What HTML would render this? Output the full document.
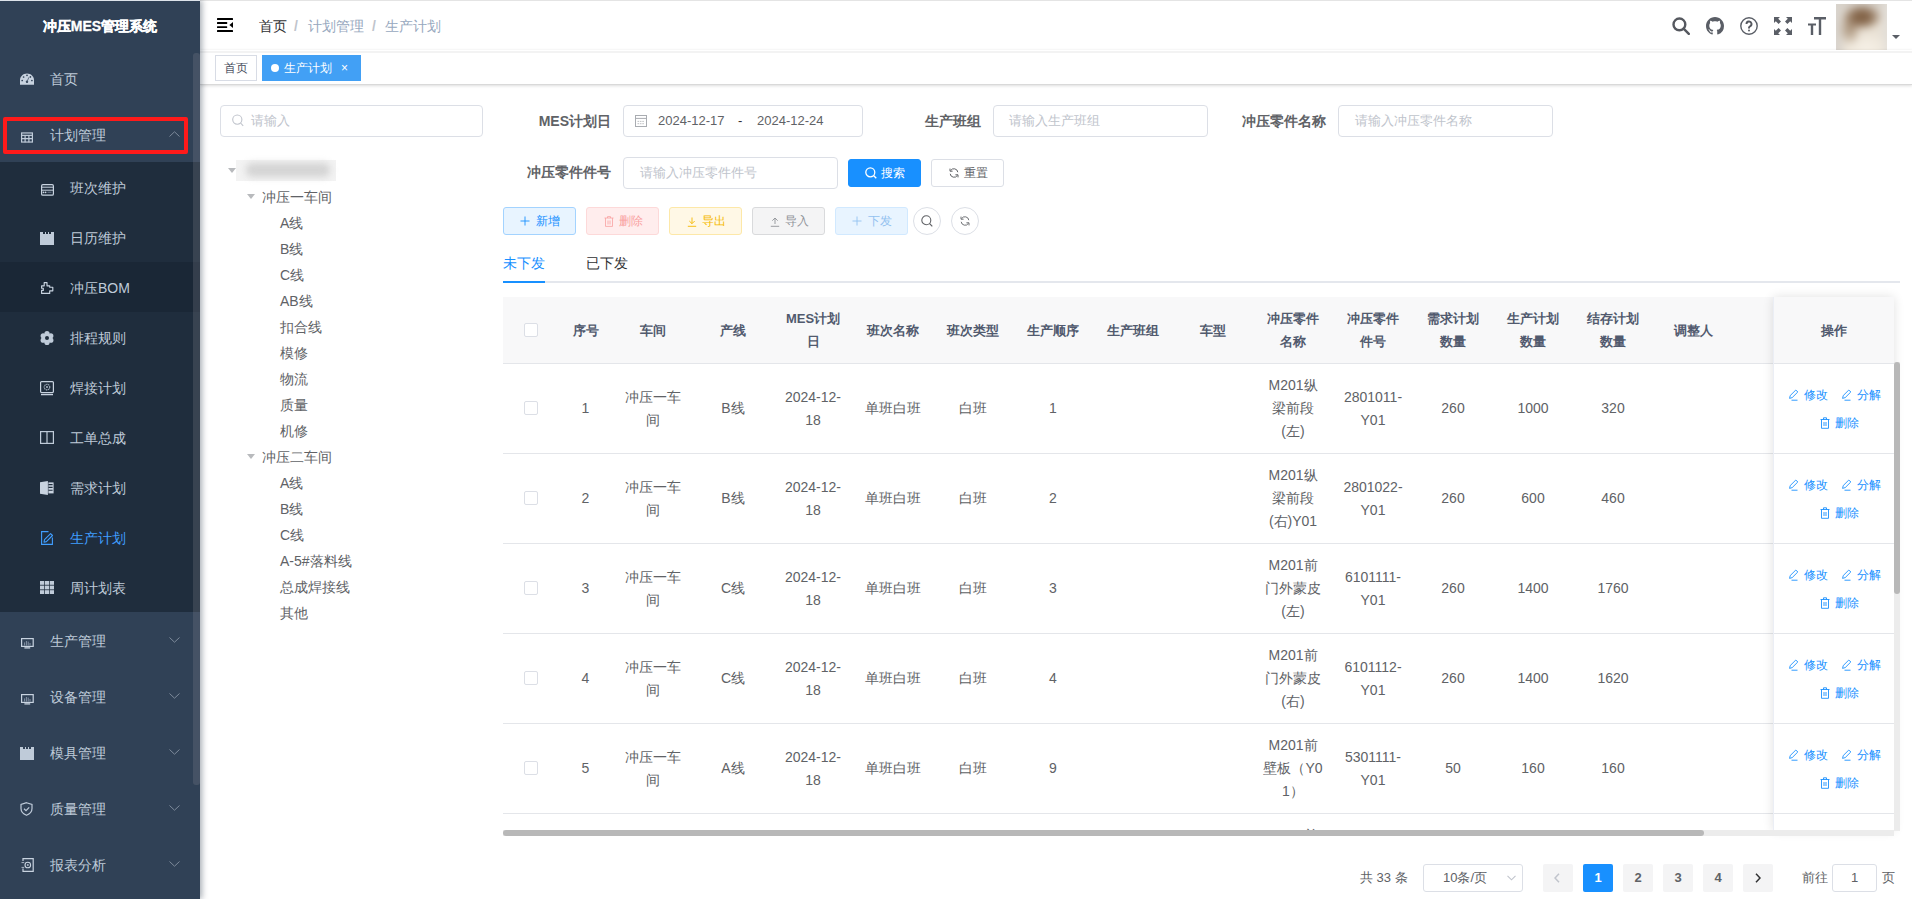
<!DOCTYPE html><html><head><meta charset="utf-8"><title>生产计划</title><style>
*{box-sizing:border-box;margin:0;padding:0}
html,body{width:1912px;height:899px;overflow:hidden}
body{position:relative;font-family:"Liberation Sans",sans-serif;font-size:14px;color:#606266;background:#fff}
.a{position:absolute;white-space:nowrap}
#side{left:0;top:0;width:200px;height:899px;background:#304156;box-shadow:2px 0 6px rgba(0,21,41,.35);z-index:5;overflow:hidden}
.mi{position:absolute;left:0;width:200px;color:#bfcbd9;font-size:14px}
.mi svg{position:absolute}
.inp{position:absolute;border:1px solid #dcdfe6;border-radius:4px;background:#fff}
.ph{position:absolute;color:#c0c4cc;font-size:13px}
.lbl{position:absolute;font-weight:bold;color:#606266;font-size:14px;text-align:right}
.btn{position:absolute;height:28px;border:1px solid;border-radius:3px;font-size:12px}
.btn span{position:absolute}
.th{position:absolute;font-weight:bold;color:#515a6e;font-size:13px;line-height:23px;text-align:center;display:flex;align-items:center;justify-content:center}
.td{position:absolute;color:#606266;font-size:14px;line-height:23px;text-align:center;display:flex;align-items:center;justify-content:center}
.td div,.th div{width:60px;word-break:break-all;white-space:normal}
.hl{position:absolute;height:1px;background:#e4e6ea}
.tree{position:absolute;font-size:14px;color:#606266;line-height:26px}
.pg{position:absolute;top:864px;width:30px;height:28px;background:#f4f4f5;border-radius:2px;font-size:13px;font-weight:bold;color:#606266;text-align:center;line-height:28px}
</style></head><body>
<div id="side" class="a">
<div class="a" style="left:0;top:1px;width:200px;height:50px;line-height:50px;text-align:center;color:#fff;font-weight:bold;font-size:14px;-webkit-text-stroke:0.3px #fff">冲压MES管理系统</div>
<div class="a" style="left:0;top:162px;width:200px;height:450px;background:#1f2d3d"></div>
<div class="a" style="left:0;top:262px;width:200px;height:50px;background:#1a2736"></div>
<div class="a" style="left:20px;top:72px"><svg width="14" height="12" viewBox="0 0 14 12"><path d="M0 11.8V7.2C0 3.2 3.1 0.4 7 0.4S14 3.2 14 7.2v4.6z" fill="#c8d3e0"/><g fill="#304156"><circle cx="3.6" cy="4" r="0.85"/><circle cx="7" cy="2.3" r="0.85"/><circle cx="10.4" cy="3.9" r="0.85"/><circle cx="2.2" cy="7.5" r="0.85"/><circle cx="11.9" cy="7.5" r="0.85"/><circle cx="7" cy="8.8" r="1.2"/></g><path d="M7 8.8L8.9 4.3" stroke="#56657a" stroke-width="0.9"/></svg></div>
<div class="a" style="left:50px;top:69px;line-height:20px;color:#bfcbd9">首页</div>
<div class="a" style="left:21px;top:130px"><svg width="12" height="11" viewBox="0 0 14 12"><rect x="0.7" y="0.7" width="12.6" height="10.6" fill="none" stroke="#bfcbd9" stroke-width="1.4"/><path d="M0.7 3.5h12.6" stroke="#bfcbd9" stroke-width="1.4"/><path d="M4.8 3.5v8M9.2 3.5v8M0.7 7.4h12.6" stroke="#bfcbd9" stroke-width="1.4"/></svg></div>
<div class="a" style="left:50px;top:125px;line-height:20px;color:#bfcbd9">计划管理</div>
<svg class="a" style="left:169px;top:131px" width="11" height="6" viewBox="0 0 11 6"><path d="M0.5 5.5L5.5 0.8l5 4.7" fill="none" stroke="#7d8a9b" stroke-width="1"/></svg>
<div class="a" style="left:41px;top:183px"><svg width="13" height="12" viewBox="0 0 13 12"><rect x="0.6" y="0.6" width="11.8" height="10.6" rx="1.3" fill="none" stroke="#c8d3e0" stroke-width="1.2"/><path d="M0.6 3.2H12.4M0.6 6.2H12.4" stroke="#c8d3e0" stroke-width="1"/><circle cx="2.5" cy="8.3" r="0.9" fill="#c8d3e0"/><circle cx="4.6" cy="8.3" r="0.9" fill="#c8d3e0"/><path d="M6.5 8.3H10.5" stroke="#56657a" stroke-width="1.4"/></svg></div>
<div class="a" style="left:70px;top:178px;line-height:20px;color:#bfcbd9">班次维护</div>
<div class="a" style="left:40px;top:231px"><svg width="14" height="14" viewBox="0 0 14 14"><rect x="0" y="1" width="14" height="13" fill="#bfcbd9"/><rect x="3" y="0" width="2" height="3" fill="#1f2d3d"/><rect x="9" y="0" width="2" height="3" fill="#1f2d3d"/><rect x="6" y="0" width="2" height="3" fill="#1f2d3d"/></svg></div>
<div class="a" style="left:70px;top:228px;line-height:20px;color:#bfcbd9">日历维护</div>
<div class="a" style="left:41px;top:282px"><svg width="13" height="13" viewBox="0 0 13 13"><path d="M0.6 3.8H3.2V0.6H6V3.8H8.7V5.2H11.8V8.8H8.7V11.4H0.6V8.4H2.3V6.2H0.6Z" fill="none" stroke="#c8d3e0" stroke-width="1.15" stroke-linejoin="round"/></svg></div>
<div class="a" style="left:70px;top:278px;line-height:20px;color:#bfcbd9">冲压BOM</div>
<div class="a" style="left:40px;top:331px"><svg width="14" height="14" viewBox="0 0 14 14"><g fill="#bfcbd9"><circle cx="7" cy="2.6" r="2.6"/><circle cx="7" cy="11.4" r="2.6"/><circle cx="3.2" cy="4.8" r="2.6"/><circle cx="10.8" cy="4.8" r="2.6"/><circle cx="3.2" cy="9.2" r="2.6"/><circle cx="10.8" cy="9.2" r="2.6"/><circle cx="7" cy="7" r="4.5"/></g><circle cx="7" cy="7" r="2" fill="#1f2d3d"/></svg></div>
<div class="a" style="left:70px;top:328px;line-height:20px;color:#bfcbd9">排程规则</div>
<div class="a" style="left:40px;top:381px"><svg width="14" height="15" viewBox="0 0 14 15"><rect x="0.6" y="0.6" width="12.8" height="11" rx="1" fill="none" stroke="#c8d3e0" stroke-width="1.2"/><path d="M1 13.6H13" stroke="#c8d3e0" stroke-width="1.3"/><circle cx="7" cy="6.1" r="2.8" fill="none" stroke="#aab6c5" stroke-width="1.1" stroke-dasharray="1.4 0.6"/><circle cx="7" cy="6.1" r="1" fill="#aab6c5"/></svg></div>
<div class="a" style="left:70px;top:378px;line-height:20px;color:#bfcbd9">焊接计划</div>
<div class="a" style="left:40px;top:431px"><svg width="14" height="13" viewBox="0 0 14 13"><rect x="0.6" y="0.6" width="12.8" height="11.8" fill="none" stroke="#bfcbd9" stroke-width="1.2"/><path d="M7 0.6v11.8" stroke="#bfcbd9" stroke-width="1.2"/></svg></div>
<div class="a" style="left:70px;top:428px;line-height:20px;color:#bfcbd9">工单总成</div>
<div class="a" style="left:40px;top:481px"><svg width="14" height="14" viewBox="0 0 14 14"><path d="M0 1.2L7.9 0V14L0 12.8Z" fill="#c8d3e0"/><rect x="8.4" y="1.4" width="5.2" height="11" fill="#c8d3e0"/><path d="M8.4 3.6H12.6M8.4 6.4H12.6M8.4 9.2H12.6" stroke="#1f2d3d" stroke-width="1.1"/></svg></div>
<div class="a" style="left:70px;top:478px;line-height:20px;color:#bfcbd9">需求计划</div>
<div class="a" style="left:41px;top:531px"><svg width="13" height="15" viewBox="0 0 13 15"><path d="M7.5 0.6H0.6V13.4H11.4V6.5" fill="none" stroke="#409eff" stroke-width="1.1"/><path d="M3 11.2L3.5 8.7 9.6 2.6 11.5 4.5 5.4 10.6Z" fill="none" stroke="#409eff" stroke-width="1.1" stroke-linejoin="round"/></svg></div>
<div class="a" style="left:70px;top:528px;line-height:20px;color:#409eff">生产计划</div>
<div class="a" style="left:40px;top:581px"><svg width="14" height="13" viewBox="0 0 14 13"><g fill="#bfcbd9"><rect x="0" y="0" width="4.2" height="3.8"/><rect x="4.9" y="0" width="4.2" height="3.8"/><rect x="9.8" y="0" width="4.2" height="3.8"/><rect x="0" y="4.6" width="4.2" height="3.8"/><rect x="4.9" y="4.6" width="4.2" height="3.8"/><rect x="9.8" y="4.6" width="4.2" height="3.8"/><rect x="0" y="9.2" width="4.2" height="3.8"/><rect x="4.9" y="9.2" width="4.2" height="3.8"/><rect x="9.8" y="9.2" width="4.2" height="3.8"/></g></svg></div>
<div class="a" style="left:70px;top:578px;line-height:20px;color:#bfcbd9">周计划表</div>
<div class="a" style="left:21px;top:636px"><svg width="13" height="11" viewBox="0 0 13 11"><rect x="0.6" y="0.6" width="11.6" height="7.8" fill="none" stroke="#c8d3e0" stroke-width="1.2"/><path d="M3.6 7.6V4.4M5.4 7.6V3M7.2 7.6V3.6M9 7.6V5" stroke="#8593a6" stroke-width="1"/><path d="M3.4 9.9H9.2" stroke="#c8d3e0" stroke-width="1.3"/></svg></div>
<div class="a" style="left:50px;top:631px;line-height:20px;color:#bfcbd9">生产管理</div>
<svg class="a" style="left:169px;top:637px" width="11" height="6" viewBox="0 0 11 6"><path d="M0.5 0.5l5 4.7 5-4.7" fill="none" stroke="#7d8a9b" stroke-width="1"/></svg>
<div class="a" style="left:21px;top:692px"><svg width="13" height="11" viewBox="0 0 13 11"><rect x="0.6" y="0.6" width="11.6" height="7.8" fill="none" stroke="#c8d3e0" stroke-width="1.2"/><path d="M3.6 7.6V4.4M5.4 7.6V3M7.2 7.6V3.6M9 7.6V5" stroke="#8593a6" stroke-width="1"/><path d="M3.4 9.9H9.2" stroke="#c8d3e0" stroke-width="1.3"/></svg></div>
<div class="a" style="left:50px;top:687px;line-height:20px;color:#bfcbd9">设备管理</div>
<svg class="a" style="left:169px;top:693px" width="11" height="6" viewBox="0 0 11 6"><path d="M0.5 0.5l5 4.7 5-4.7" fill="none" stroke="#7d8a9b" stroke-width="1"/></svg>
<div class="a" style="left:20px;top:746px"><svg width="14" height="14" viewBox="0 0 14 14"><rect x="0" y="1" width="14" height="13" fill="#bfcbd9"/><rect x="3" y="0" width="2" height="3" fill="#304156"/><rect x="9" y="0" width="2" height="3" fill="#304156"/><rect x="6" y="0" width="2" height="3" fill="#304156"/></svg></div>
<div class="a" style="left:50px;top:743px;line-height:20px;color:#bfcbd9">模具管理</div>
<svg class="a" style="left:169px;top:749px" width="11" height="6" viewBox="0 0 11 6"><path d="M0.5 0.5l5 4.7 5-4.7" fill="none" stroke="#7d8a9b" stroke-width="1"/></svg>
<div class="a" style="left:20px;top:802px"><svg width="13" height="14" viewBox="0 0 13 14"><path d="M6.5 0.7L12 2.4v4.2c0 3.4-2.6 5.6-5.5 6.7C3.6 12.2 1 10 1 6.6V2.4z" fill="none" stroke="#bfcbd9" stroke-width="1.2"/><path d="M4 6.8l2 1.8 3.2-3.3" fill="none" stroke="#bfcbd9" stroke-width="1.2"/></svg></div>
<div class="a" style="left:50px;top:799px;line-height:20px;color:#bfcbd9">质量管理</div>
<svg class="a" style="left:169px;top:805px" width="11" height="6" viewBox="0 0 11 6"><path d="M0.5 0.5l5 4.7 5-4.7" fill="none" stroke="#7d8a9b" stroke-width="1"/></svg>
<div class="a" style="left:21px;top:858px"><svg width="13" height="14" viewBox="0 0 13 14"><path d="M2 3V0.6H12.2V13.4H2V10.6" fill="none" stroke="#c8d3e0" stroke-width="1.2"/><path d="M0.5 4.6H3.2M0.5 9.4H3.2" stroke="#aab6c5" stroke-width="1"/><circle cx="6.8" cy="7" r="2.8" fill="none" stroke="#c8d3e0" stroke-width="1.1"/><circle cx="6.8" cy="7" r="1" fill="#aab6c5"/></svg></div>
<div class="a" style="left:50px;top:855px;line-height:20px;color:#bfcbd9">报表分析</div>
<svg class="a" style="left:169px;top:861px" width="11" height="6" viewBox="0 0 11 6"><path d="M0.5 0.5l5 4.7 5-4.7" fill="none" stroke="#7d8a9b" stroke-width="1"/></svg>
<div class="a" style="left:3px;top:117px;width:185px;height:37px;border:4px solid #ff1a1a;border-radius:2px"></div>
<div class="a" style="left:0;top:0;width:200px;height:1px;background:#dde3ea"></div>
<div class="a" style="left:193px;top:53px;width:7px;height:732px;background:rgba(144,147,153,.22);border-radius:3px"></div>
</div>
<div class="a" style="left:200px;top:0;width:1712px;height:50px;background:#fff;border-top:1px solid #e4e4e4"></div>
<svg class="a" style="left:217px;top:17px" width="16" height="16" viewBox="0 0 16 16"><g fill="#000"><rect x="0" y="0.9" width="16" height="2" rx="0.5"/><rect x="0" y="5.1" width="10.2" height="1.8" rx="0.5"/><rect x="0" y="9.2" width="10.2" height="1.8" rx="0.5"/><rect x="0" y="13" width="16" height="2" rx="0.5"/><path d="M16 5.1V10.9L12.4 8z"/></g></svg>
<div class="a" style="left:259px;top:16px;line-height:20px;color:#303133">首页</div>
<div class="a" style="left:294px;top:16px;line-height:20px;color:#c0c4cc;font-weight:bold">/</div>
<div class="a" style="left:308px;top:16px;line-height:20px;color:#97a8be">计划管理</div>
<div class="a" style="left:372px;top:16px;line-height:20px;color:#c0c4cc;font-weight:bold">/</div>
<div class="a" style="left:385px;top:16px;line-height:20px;color:#97a8be">生产计划</div>
<svg class="a" style="left:1672px;top:17px" width="18" height="18" viewBox="0 0 18 18"><circle cx="7.4" cy="7.4" r="5.9" fill="none" stroke="#55585f" stroke-width="2.4"/><path d="M11.6 11.6L16.8 16.8" stroke="#55585f" stroke-width="2.4" stroke-linecap="round"/></svg>
<svg class="a" style="left:1706px;top:17px" width="18" height="18" viewBox="0 0 16 16"><path fill="#5a5e66" d="M8 0C3.58 0 0 3.58 0 8c0 3.54 2.29 6.53 5.47 7.59.4.07.55-.17.55-.38 0-.19-.01-.82-.01-1.49-2.01.37-2.53-.49-2.69-.94-.09-.23-.48-.94-.82-1.13-.28-.15-.68-.52-.01-.53.63-.01 1.08.58 1.23.82.72 1.21 1.87.87 2.33.66.07-.52.28-.87.51-1.07-1.78-.2-3.64-.89-3.64-3.95 0-.87.31-1.59.82-2.15-.08-.2-.36-1.02.08-2.12 0 0 .67-.21 2.2.82.64-.18 1.32-.27 2-.27.68 0 1.36.09 2 .27 1.53-1.04 2.2-.82 2.2-.82.44 1.1.16 1.92.08 2.12.51.56.82 1.27.82 2.15 0 3.07-1.87 3.75-3.65 3.95.29.25.54.73.54 1.48 0 1.07-.01 1.93-.01 2.2 0 .21.15.46.55.38A8.013 8.013 0 0016 8c0-4.42-3.58-8-8-8z"/></svg>
<svg class="a" style="left:1740px;top:17px" width="18" height="18" viewBox="0 0 18 18"><circle cx="9" cy="9" r="8.2" fill="none" stroke="#5a5e66" stroke-width="1.4"/><path d="M6.5 7a2.5 2.5 0 1 1 3.5 2.3c-.7.3-1 .8-1 1.5v.7" fill="none" stroke="#55585f" stroke-width="1.9"/><circle cx="9" cy="13.6" r="1" fill="#5a5e66"/></svg>
<svg class="a" style="left:1774px;top:17px" width="18" height="18" viewBox="0 0 18 18"><g fill="#5a5e66"><path d="M0 0h6L4.2 1.8 7 4.6 4.6 7 1.8 4.2 0 6z"/><path d="M18 0v6l-1.8-1.8L13.4 7 11 4.6l2.8-2.8L12 0z"/><path d="M0 18v-6l1.8 1.8L4.6 11 7 13.4l-2.8 2.8L6 18z"/><path d="M18 18h-6l1.8-1.8L11 13.4 13.4 11l2.8 2.8L18 12z"/></g></svg>
<svg class="a" style="left:1808px;top:17px" width="18" height="18" viewBox="0 0 18 18"><g fill="#5a5e66"><path d="M6 0h12v2.4h-4.8V18h-2.4V2.4H6z"/><path d="M0 6.5h8v2H5.2V18H2.8V8.5H0z"/></g></svg>
<div class="a" style="left:1836px;top:4px;width:51px;height:46px;overflow:hidden;background:#ebe4d9"><div class="a" style="left:-6px;top:-6px;width:63px;height:58px;background:radial-gradient(ellipse 21px 14px at 32px 19px,#7d5c3f 0%,rgba(125,92,63,.85) 40%,rgba(160,130,100,0) 100%),radial-gradient(ellipse 12px 17px at 20px 31px,rgba(140,110,80,.7) 0%,rgba(160,130,100,0) 100%),radial-gradient(ellipse 24px 16px at 37px 50px,#f6f0e6 0%,rgba(246,240,230,0) 100%),linear-gradient(to right,#d6d3d0 0,#d9d3cb 9px,rgba(230,222,210,0) 18px,rgba(230,222,210,0) 48px,#e2ded8 57px),linear-gradient(#cfc9c2 0,#e6ded2 22px,#efe7da 58px);filter:blur(3px)"></div></div>
<svg class="a" style="left:1892px;top:35px" width="8" height="4" viewBox="0 0 8 4"><path d="M0 0h8L4 4z" fill="#5a5e66"/></svg>
<div class="a" style="left:200px;top:50px;width:1712px;height:35px;background:#fff;border-bottom:1px solid #d9d9d9;box-shadow:0 1px 3px 0 rgba(0,0,0,.12),0 0 3px 0 rgba(0,0,0,.04)"></div>
<div class="a" style="left:200px;top:51px;width:1712px;height:2px;background:#f3f3f3;filter:blur(0.6px)"></div>
<div class="a" style="left:215px;top:55px;width:42px;height:26px;border:1px solid #d8dce5;font-size:12px;color:#495060;line-height:24px;text-align:center">首页</div>
<div class="a" style="left:262px;top:55px;width:99px;height:26px;background:#42a0f5;border:1px solid #42a0f5;font-size:12px;color:#fff;line-height:24px"><span class="a" style="left:8px;top:8px;width:8px;height:8px;border-radius:4px;background:#fff"></span><span class="a" style="left:21px;top:0">生产计划</span><span class="a" style="left:78px;top:0;font-size:12px">×</span></div>
<div class="inp" style="left:220px;top:105px;width:263px;height:32px"></div>
<svg class="a" style="left:232px;top:114px" width="12" height="13" viewBox="0 0 12 13"><circle cx="5.3" cy="5.6" r="4.6" fill="none" stroke="#c0c4cc" stroke-width="1.1"/><path d="M8.6 9l2.6 2.8" stroke="#c0c4cc" stroke-width="1.1"/></svg>
<div class="ph" style="left:251px;top:111px;line-height:20px">请输入</div>
<svg class="a" style="left:228px;top:168px" width="8" height="5" viewBox="0 0 8 5"><path d="M0 0h8L4 5z" fill="#b8babd"/></svg>
<div class="a" style="left:236px;top:160px;width:100px;height:21px;background:#f3f3f3"></div><div class="a" style="left:246px;top:163px;width:84px;height:14px;background:#d4d4d4;border-radius:6px;filter:blur(3.5px)"></div>
<svg class="a" style="left:247px;top:194px" width="8" height="5" viewBox="0 0 8 5"><path d="M0 0h8L4 5z" fill="#b8babd"/></svg>
<div class="tree" style="left:262px;top:184px">冲压一车间</div>
<div class="tree" style="left:280px;top:210px">A线</div>
<div class="tree" style="left:280px;top:236px">B线</div>
<div class="tree" style="left:280px;top:262px">C线</div>
<div class="tree" style="left:280px;top:288px">AB线</div>
<div class="tree" style="left:280px;top:314px">扣合线</div>
<div class="tree" style="left:280px;top:340px">模修</div>
<div class="tree" style="left:280px;top:366px">物流</div>
<div class="tree" style="left:280px;top:392px">质量</div>
<div class="tree" style="left:280px;top:418px">机修</div>
<svg class="a" style="left:247px;top:454px" width="8" height="5" viewBox="0 0 8 5"><path d="M0 0h8L4 5z" fill="#b8babd"/></svg>
<div class="tree" style="left:262px;top:444px">冲压二车间</div>
<div class="tree" style="left:280px;top:470px">A线</div>
<div class="tree" style="left:280px;top:496px">B线</div>
<div class="tree" style="left:280px;top:522px">C线</div>
<div class="tree" style="left:280px;top:548px">A-5#落料线</div>
<div class="tree" style="left:280px;top:574px">总成焊接线</div>
<div class="tree" style="left:280px;top:600px">其他</div>
<div class="lbl" style="left:511px;top:111px;width:100px;line-height:20px">MES计划日</div>
<div class="inp" style="left:623px;top:105px;width:240px;height:32px"></div>
<svg class="a" style="left:635px;top:115px" width="12" height="12" viewBox="0 0 12 12"><rect x="0.5" y="0.5" width="11" height="11" fill="none" stroke="#a9acb1" stroke-width="1"/><path d="M0.5 3.4h11" stroke="#a9acb1" stroke-width="1"/><path d="M2.5 6.4h7M2.5 8.7h7" stroke="#b8babd" stroke-width="0.9" stroke-dasharray="1.6 0.8"/></svg>
<div class="a" style="left:658px;top:111px;line-height:20px;font-size:13px;color:#606266">2024-12-17</div>
<div class="a" style="left:738px;top:111px;line-height:20px;font-size:13px;color:#303133">-</div>
<div class="a" style="left:757px;top:111px;line-height:20px;font-size:13px;color:#606266">2024-12-24</div>
<div class="lbl" style="left:881px;top:111px;width:100px;line-height:20px">生产班组</div>
<div class="inp" style="left:993px;top:105px;width:215px;height:32px"></div>
<div class="ph" style="left:1009px;top:111px;line-height:20px">请输入生产班组</div>
<div class="lbl" style="left:1206px;top:111px;width:120px;line-height:20px">冲压零件名称</div>
<div class="inp" style="left:1338px;top:105px;width:215px;height:32px"></div>
<div class="ph" style="left:1355px;top:111px;line-height:20px">请输入冲压零件名称</div>
<div class="lbl" style="left:491px;top:162px;width:120px;line-height:20px">冲压零件件号</div>
<div class="inp" style="left:623px;top:157px;width:215px;height:32px"></div>
<div class="ph" style="left:640px;top:163px;line-height:20px">请输入冲压零件件号</div>
<div class="btn" style="left:848px;top:159px;width:73px;background:#1890ff;border-color:#1890ff;color:#fff"><svg class="a" style="left:16px;top:7px" width="12" height="12" viewBox="0 0 12 12"><circle cx="5.3" cy="5.3" r="4.5" fill="none" stroke="#fff" stroke-width="1.3"/><path d="M8.5 8.5l2.8 2.8" stroke="#fff" stroke-width="1.3"/></svg><span style="left:32px;top:6px;line-height:14px">搜索</span></div>
<div class="btn" style="left:931px;top:159px;width:73px;background:#fff;border-color:#dcdfe6;color:#606266"><svg class="a" style="left:17px;top:8px" width="10" height="10" viewBox="0 0 10 10"><path d="M8.8 4.2A3.9 3.9 0 0 0 1.6 2.6M1.2 5.8a3.9 3.9 0 0 0 7.2 1.6" fill="none" stroke="#606266" stroke-width="1"/><path d="M1 0.6v2.6h2.6M9 9.4V6.8H6.4" fill="none" stroke="#606266" stroke-width="1"/></svg><span style="left:32px;top:6px;line-height:14px">重置</span></div>
<div class="btn" style="left:503px;top:207px;width:73px;background:#e8f4ff;border-color:#a3d3ff;color:#1890ff"><svg class="a" style="left:16px;top:8px" width="10" height="10" viewBox="0 0 10 10"><path d="M5 0.5v9M0.5 5h9" stroke="#1890ff" stroke-width="0.9"/></svg><span style="left:32px;top:6px;line-height:14px">新增</span></div>
<div class="btn" style="left:586px;top:207px;width:73px;background:#ffeded;border-color:#fdd9d9;color:#f9a1a1"><svg class="a" style="left:17px;top:8px" width="10" height="11" viewBox="0 0 10 11"><path d="M0.5 2h9M3.5 2V0.6h3V2M1.5 2v8.4h7V2M4 4.5v4M6 4.5v4" fill="none" stroke="#f9a1a1" stroke-width="0.8"/></svg><span style="left:32px;top:6px;line-height:14px">删除</span></div>
<div class="btn" style="left:669px;top:207px;width:73px;background:#fff8e6;border-color:#fde8a8;color:#f5b800"><svg class="a" style="left:17px;top:9px" width="10" height="10" viewBox="0 0 10 10"><path d="M5 0.5v6M2.3 4l2.7 2.7L7.7 4M0.8 9.3h8.4" fill="none" stroke="#f5b800" stroke-width="0.9"/></svg><span style="left:32px;top:6px;line-height:14px">导出</span></div>
<div class="btn" style="left:752px;top:207px;width:73px;background:#f4f4f5;border-color:#d9dadc;color:#909399"><svg class="a" style="left:17px;top:9px" width="10" height="10" viewBox="0 0 10 10"><path d="M5 7V1M2.3 3.7L5 1l2.7 2.7M0.8 9.3h8.4" fill="none" stroke="#909399" stroke-width="0.9"/></svg><span style="left:32px;top:6px;line-height:14px">导入</span></div>
<div class="btn" style="left:835px;top:207px;width:73px;background:#e8f4ff;border-color:#d1e9ff;color:#93c2f0"><svg class="a" style="left:16px;top:8px" width="10" height="10" viewBox="0 0 10 10"><path d="M5 0.5v9M0.5 5h9" stroke="#93c2f0" stroke-width="0.9"/></svg><span style="left:32px;top:6px;line-height:14px">下发</span></div>
<div class="a" style="left:913px;top:207px;width:28px;height:28px;border:1px solid #dcdfe6;border-radius:14px;background:#fff"><svg class="a" style="left:7px;top:7px" width="12" height="12" viewBox="0 0 12 12"><circle cx="5.3" cy="5.3" r="4.5" fill="none" stroke="#606266" stroke-width="1.1"/><path d="M8.5 8.5l2.8 2.8" stroke="#606266" stroke-width="1.1"/></svg></div>
<div class="a" style="left:951px;top:207px;width:28px;height:28px;border:1px solid #dcdfe6;border-radius:14px;background:#fff"><svg class="a" style="left:8px;top:8px" width="10" height="10" viewBox="0 0 10 10"><path d="M8.8 4.2A3.9 3.9 0 0 0 1.6 2.6M1.2 5.8a3.9 3.9 0 0 0 7.2 1.6" fill="none" stroke="#606266" stroke-width="0.9"/><path d="M1 0.6v2.6h2.6M9 9.4V6.8H6.4" fill="none" stroke="#606266" stroke-width="0.9"/></svg></div>
<div class="a" style="left:503px;top:281px;width:1397px;height:2px;background:#e4e7ed"></div>
<div class="a" style="left:503px;top:281px;width:42px;height:2px;background:#1890ff"></div>
<div class="a" style="left:503px;top:253px;line-height:20px;color:#1890ff">未下发</div>
<div class="a" style="left:586px;top:253px;line-height:20px;color:#303133">已下发</div>
<div class="a" style="left:503px;top:297px;width:1391px;height:66px;background:#f8f8f9"></div>
<div class="hl" style="left:503px;top:363px;width:1391px"></div>
<div class="a" style="left:524px;top:323px;width:14px;height:14px;border:1px solid #dcdfe6;border-radius:2px;background:#fff"></div>
<div class="th" style="left:558px;top:297px;width:55px;height:66px"><div>序号</div></div>
<div class="th" style="left:613px;top:297px;width:80px;height:66px"><div>车间</div></div>
<div class="th" style="left:693px;top:297px;width:80px;height:66px"><div>产线</div></div>
<div class="th" style="left:773px;top:297px;width:80px;height:66px"><div>MES计划日</div></div>
<div class="th" style="left:853px;top:297px;width:80px;height:66px"><div>班次名称</div></div>
<div class="th" style="left:933px;top:297px;width:80px;height:66px"><div>班次类型</div></div>
<div class="th" style="left:1013px;top:297px;width:80px;height:66px"><div>生产顺序</div></div>
<div class="th" style="left:1093px;top:297px;width:80px;height:66px"><div>生产班组</div></div>
<div class="th" style="left:1173px;top:297px;width:80px;height:66px"><div>车型</div></div>
<div class="th" style="left:1253px;top:297px;width:80px;height:66px"><div>冲压零件名称</div></div>
<div class="th" style="left:1333px;top:297px;width:80px;height:66px"><div>冲压零件件号</div></div>
<div class="th" style="left:1413px;top:297px;width:80px;height:66px"><div>需求计划数量</div></div>
<div class="th" style="left:1493px;top:297px;width:80px;height:66px"><div>生产计划数量</div></div>
<div class="th" style="left:1573px;top:297px;width:80px;height:66px"><div>结存计划数量</div></div>
<div class="th" style="left:1653px;top:297px;width:80px;height:66px"><div>调整人</div></div>
<div class="a" style="left:503px;top:364px;width:1391px;height:466px;overflow:hidden">
<div class="a" style="left:21px;top:37px;width:14px;height:14px;border:1px solid #dcdfe6;border-radius:2px;background:#fff"></div>
<div class="td" style="left:55px;top:0px;width:55px;height:89px"><div>1</div></div>
<div class="td" style="left:110px;top:0px;width:80px;height:89px"><div>冲压一车间</div></div>
<div class="td" style="left:190px;top:0px;width:80px;height:89px"><div>B线</div></div>
<div class="td" style="left:270px;top:0px;width:80px;height:89px"><div>2024-12-18</div></div>
<div class="td" style="left:350px;top:0px;width:80px;height:89px"><div>单班白班</div></div>
<div class="td" style="left:430px;top:0px;width:80px;height:89px"><div>白班</div></div>
<div class="td" style="left:510px;top:0px;width:80px;height:89px"><div>1</div></div>
<div class="td" style="left:750px;top:0px;width:80px;height:89px"><div>M201纵梁前段(左)</div></div>
<div class="td" style="left:830px;top:0px;width:80px;height:89px"><div>2801011-Y01</div></div>
<div class="td" style="left:910px;top:0px;width:80px;height:89px"><div>260</div></div>
<div class="td" style="left:990px;top:0px;width:80px;height:89px"><div>1000</div></div>
<div class="td" style="left:1070px;top:0px;width:80px;height:89px"><div>320</div></div>
<div class="hl" style="left:0;top:89px;width:1391px"></div>
<div class="a" style="left:21px;top:127px;width:14px;height:14px;border:1px solid #dcdfe6;border-radius:2px;background:#fff"></div>
<div class="td" style="left:55px;top:90px;width:55px;height:89px"><div>2</div></div>
<div class="td" style="left:110px;top:90px;width:80px;height:89px"><div>冲压一车间</div></div>
<div class="td" style="left:190px;top:90px;width:80px;height:89px"><div>B线</div></div>
<div class="td" style="left:270px;top:90px;width:80px;height:89px"><div>2024-12-18</div></div>
<div class="td" style="left:350px;top:90px;width:80px;height:89px"><div>单班白班</div></div>
<div class="td" style="left:430px;top:90px;width:80px;height:89px"><div>白班</div></div>
<div class="td" style="left:510px;top:90px;width:80px;height:89px"><div>2</div></div>
<div class="td" style="left:750px;top:90px;width:80px;height:89px"><div>M201纵梁前段(右)Y01</div></div>
<div class="td" style="left:830px;top:90px;width:80px;height:89px"><div>2801022-Y01</div></div>
<div class="td" style="left:910px;top:90px;width:80px;height:89px"><div>260</div></div>
<div class="td" style="left:990px;top:90px;width:80px;height:89px"><div>600</div></div>
<div class="td" style="left:1070px;top:90px;width:80px;height:89px"><div>460</div></div>
<div class="hl" style="left:0;top:179px;width:1391px"></div>
<div class="a" style="left:21px;top:217px;width:14px;height:14px;border:1px solid #dcdfe6;border-radius:2px;background:#fff"></div>
<div class="td" style="left:55px;top:180px;width:55px;height:89px"><div>3</div></div>
<div class="td" style="left:110px;top:180px;width:80px;height:89px"><div>冲压一车间</div></div>
<div class="td" style="left:190px;top:180px;width:80px;height:89px"><div>C线</div></div>
<div class="td" style="left:270px;top:180px;width:80px;height:89px"><div>2024-12-18</div></div>
<div class="td" style="left:350px;top:180px;width:80px;height:89px"><div>单班白班</div></div>
<div class="td" style="left:430px;top:180px;width:80px;height:89px"><div>白班</div></div>
<div class="td" style="left:510px;top:180px;width:80px;height:89px"><div>3</div></div>
<div class="td" style="left:750px;top:180px;width:80px;height:89px"><div>M201前门外蒙皮(左)</div></div>
<div class="td" style="left:830px;top:180px;width:80px;height:89px"><div>6101111-Y01</div></div>
<div class="td" style="left:910px;top:180px;width:80px;height:89px"><div>260</div></div>
<div class="td" style="left:990px;top:180px;width:80px;height:89px"><div>1400</div></div>
<div class="td" style="left:1070px;top:180px;width:80px;height:89px"><div>1760</div></div>
<div class="hl" style="left:0;top:269px;width:1391px"></div>
<div class="a" style="left:21px;top:307px;width:14px;height:14px;border:1px solid #dcdfe6;border-radius:2px;background:#fff"></div>
<div class="td" style="left:55px;top:270px;width:55px;height:89px"><div>4</div></div>
<div class="td" style="left:110px;top:270px;width:80px;height:89px"><div>冲压一车间</div></div>
<div class="td" style="left:190px;top:270px;width:80px;height:89px"><div>C线</div></div>
<div class="td" style="left:270px;top:270px;width:80px;height:89px"><div>2024-12-18</div></div>
<div class="td" style="left:350px;top:270px;width:80px;height:89px"><div>单班白班</div></div>
<div class="td" style="left:430px;top:270px;width:80px;height:89px"><div>白班</div></div>
<div class="td" style="left:510px;top:270px;width:80px;height:89px"><div>4</div></div>
<div class="td" style="left:750px;top:270px;width:80px;height:89px"><div>M201前门外蒙皮(右)</div></div>
<div class="td" style="left:830px;top:270px;width:80px;height:89px"><div>6101112-Y01</div></div>
<div class="td" style="left:910px;top:270px;width:80px;height:89px"><div>260</div></div>
<div class="td" style="left:990px;top:270px;width:80px;height:89px"><div>1400</div></div>
<div class="td" style="left:1070px;top:270px;width:80px;height:89px"><div>1620</div></div>
<div class="hl" style="left:0;top:359px;width:1391px"></div>
<div class="a" style="left:21px;top:397px;width:14px;height:14px;border:1px solid #dcdfe6;border-radius:2px;background:#fff"></div>
<div class="td" style="left:55px;top:360px;width:55px;height:89px"><div>5</div></div>
<div class="td" style="left:110px;top:360px;width:80px;height:89px"><div>冲压一车间</div></div>
<div class="td" style="left:190px;top:360px;width:80px;height:89px"><div>A线</div></div>
<div class="td" style="left:270px;top:360px;width:80px;height:89px"><div>2024-12-18</div></div>
<div class="td" style="left:350px;top:360px;width:80px;height:89px"><div>单班白班</div></div>
<div class="td" style="left:430px;top:360px;width:80px;height:89px"><div>白班</div></div>
<div class="td" style="left:510px;top:360px;width:80px;height:89px"><div>9</div></div>
<div class="td" style="left:750px;top:360px;width:80px;height:89px"><div>M201前壁板（Y01）</div></div>
<div class="td" style="left:830px;top:360px;width:80px;height:89px"><div>5301111-Y01</div></div>
<div class="td" style="left:910px;top:360px;width:80px;height:89px"><div>50</div></div>
<div class="td" style="left:990px;top:360px;width:80px;height:89px"><div>160</div></div>
<div class="td" style="left:1070px;top:360px;width:80px;height:89px"><div>160</div></div>
<div class="hl" style="left:0;top:449px;width:1391px"></div>
<div class="a" style="left:21px;top:487px;width:14px;height:14px;border:1px solid #dcdfe6;border-radius:2px;background:#fff"></div>
<div class="td" style="left:55px;top:450px;width:55px;height:89px"><div>6</div></div>
<div class="td" style="left:110px;top:450px;width:80px;height:89px"><div>冲压一车间</div></div>
<div class="td" style="left:190px;top:450px;width:80px;height:89px"><div>A线</div></div>
<div class="td" style="left:270px;top:450px;width:80px;height:89px"><div>2024-12-18</div></div>
<div class="td" style="left:350px;top:450px;width:80px;height:89px"><div>单班白班</div></div>
<div class="td" style="left:430px;top:450px;width:80px;height:89px"><div>白班</div></div>
<div class="td" style="left:510px;top:450px;width:80px;height:89px"><div>10</div></div>
<div class="td" style="left:750px;top:450px;width:80px;height:89px"><div>M201前壁板（Y01）</div></div>
<div class="td" style="left:830px;top:450px;width:80px;height:89px"><div>5301111-Y01</div></div>
<div class="td" style="left:910px;top:450px;width:80px;height:89px"><div>50</div></div>
<div class="td" style="left:990px;top:450px;width:80px;height:89px"><div>160</div></div>
<div class="td" style="left:1070px;top:450px;width:80px;height:89px"><div>160</div></div>
<div class="hl" style="left:0;top:539px;width:1391px"></div>
</div>
<div class="a" style="left:1773px;top:297px;width:121px;height:534px;background:#fff;box-shadow:0 0 10px rgba(0,0,0,.12);overflow:hidden;border-left:1px solid #ebeef5">
<div class="a" style="left:0;top:0;width:122px;height:66px;background:#f8f8f9"></div>
<div class="th" style="left:0;top:0;width:120px;height:66px"><div>操作</div></div>
<div class="hl" style="left:0;top:66px;width:122px"></div>
<div class="a" style="left:14px;top:91px;width:44px;height:14px;color:#1890ff;font-size:12px;line-height:14px"><svg width="11" height="12" viewBox="0 0 11 12" style="position:absolute;left:0;top:1px"><path d="M1.6 9.4L2.2 6.6 7.8 1l2 2-5.6 5.6z" fill="none" stroke="#1890ff" stroke-width="0.9"/><path d="M3.5 11.2h6" stroke="#1890ff" stroke-width="0.9"/></svg><span class="a" style="left:16px;top:0">修改</span></div>
<div class="a" style="left:67px;top:91px;width:44px;height:14px;color:#1890ff;font-size:12px;line-height:14px"><svg width="11" height="12" viewBox="0 0 11 12" style="position:absolute;left:0;top:1px"><path d="M1.6 9.4L2.2 6.6 7.8 1l2 2-5.6 5.6z" fill="none" stroke="#1890ff" stroke-width="0.9"/><path d="M3.5 11.2h6" stroke="#1890ff" stroke-width="0.9"/></svg><span class="a" style="left:16px;top:0">分解</span></div>
<div class="a" style="left:46px;top:119px;width:44px;height:14px;color:#1890ff;font-size:12px;line-height:14px"><svg width="10" height="12" viewBox="0 0 10 12" style="position:absolute;left:0;top:1px"><path d="M0.5 2.5h9M3.5 2.5V0.8h3v1.7M1.5 2.5v8.8h7V2.5M4 5v4M6 5v4" fill="none" stroke="#1890ff" stroke-width="0.9"/></svg><span class="a" style="left:15px;top:0">删除</span></div>
<div class="hl" style="left:0;top:156px;width:122px"></div>
<div class="a" style="left:14px;top:181px;width:44px;height:14px;color:#1890ff;font-size:12px;line-height:14px"><svg width="11" height="12" viewBox="0 0 11 12" style="position:absolute;left:0;top:1px"><path d="M1.6 9.4L2.2 6.6 7.8 1l2 2-5.6 5.6z" fill="none" stroke="#1890ff" stroke-width="0.9"/><path d="M3.5 11.2h6" stroke="#1890ff" stroke-width="0.9"/></svg><span class="a" style="left:16px;top:0">修改</span></div>
<div class="a" style="left:67px;top:181px;width:44px;height:14px;color:#1890ff;font-size:12px;line-height:14px"><svg width="11" height="12" viewBox="0 0 11 12" style="position:absolute;left:0;top:1px"><path d="M1.6 9.4L2.2 6.6 7.8 1l2 2-5.6 5.6z" fill="none" stroke="#1890ff" stroke-width="0.9"/><path d="M3.5 11.2h6" stroke="#1890ff" stroke-width="0.9"/></svg><span class="a" style="left:16px;top:0">分解</span></div>
<div class="a" style="left:46px;top:209px;width:44px;height:14px;color:#1890ff;font-size:12px;line-height:14px"><svg width="10" height="12" viewBox="0 0 10 12" style="position:absolute;left:0;top:1px"><path d="M0.5 2.5h9M3.5 2.5V0.8h3v1.7M1.5 2.5v8.8h7V2.5M4 5v4M6 5v4" fill="none" stroke="#1890ff" stroke-width="0.9"/></svg><span class="a" style="left:15px;top:0">删除</span></div>
<div class="hl" style="left:0;top:246px;width:122px"></div>
<div class="a" style="left:14px;top:271px;width:44px;height:14px;color:#1890ff;font-size:12px;line-height:14px"><svg width="11" height="12" viewBox="0 0 11 12" style="position:absolute;left:0;top:1px"><path d="M1.6 9.4L2.2 6.6 7.8 1l2 2-5.6 5.6z" fill="none" stroke="#1890ff" stroke-width="0.9"/><path d="M3.5 11.2h6" stroke="#1890ff" stroke-width="0.9"/></svg><span class="a" style="left:16px;top:0">修改</span></div>
<div class="a" style="left:67px;top:271px;width:44px;height:14px;color:#1890ff;font-size:12px;line-height:14px"><svg width="11" height="12" viewBox="0 0 11 12" style="position:absolute;left:0;top:1px"><path d="M1.6 9.4L2.2 6.6 7.8 1l2 2-5.6 5.6z" fill="none" stroke="#1890ff" stroke-width="0.9"/><path d="M3.5 11.2h6" stroke="#1890ff" stroke-width="0.9"/></svg><span class="a" style="left:16px;top:0">分解</span></div>
<div class="a" style="left:46px;top:299px;width:44px;height:14px;color:#1890ff;font-size:12px;line-height:14px"><svg width="10" height="12" viewBox="0 0 10 12" style="position:absolute;left:0;top:1px"><path d="M0.5 2.5h9M3.5 2.5V0.8h3v1.7M1.5 2.5v8.8h7V2.5M4 5v4M6 5v4" fill="none" stroke="#1890ff" stroke-width="0.9"/></svg><span class="a" style="left:15px;top:0">删除</span></div>
<div class="hl" style="left:0;top:336px;width:122px"></div>
<div class="a" style="left:14px;top:361px;width:44px;height:14px;color:#1890ff;font-size:12px;line-height:14px"><svg width="11" height="12" viewBox="0 0 11 12" style="position:absolute;left:0;top:1px"><path d="M1.6 9.4L2.2 6.6 7.8 1l2 2-5.6 5.6z" fill="none" stroke="#1890ff" stroke-width="0.9"/><path d="M3.5 11.2h6" stroke="#1890ff" stroke-width="0.9"/></svg><span class="a" style="left:16px;top:0">修改</span></div>
<div class="a" style="left:67px;top:361px;width:44px;height:14px;color:#1890ff;font-size:12px;line-height:14px"><svg width="11" height="12" viewBox="0 0 11 12" style="position:absolute;left:0;top:1px"><path d="M1.6 9.4L2.2 6.6 7.8 1l2 2-5.6 5.6z" fill="none" stroke="#1890ff" stroke-width="0.9"/><path d="M3.5 11.2h6" stroke="#1890ff" stroke-width="0.9"/></svg><span class="a" style="left:16px;top:0">分解</span></div>
<div class="a" style="left:46px;top:389px;width:44px;height:14px;color:#1890ff;font-size:12px;line-height:14px"><svg width="10" height="12" viewBox="0 0 10 12" style="position:absolute;left:0;top:1px"><path d="M0.5 2.5h9M3.5 2.5V0.8h3v1.7M1.5 2.5v8.8h7V2.5M4 5v4M6 5v4" fill="none" stroke="#1890ff" stroke-width="0.9"/></svg><span class="a" style="left:15px;top:0">删除</span></div>
<div class="hl" style="left:0;top:426px;width:122px"></div>
<div class="a" style="left:14px;top:451px;width:44px;height:14px;color:#1890ff;font-size:12px;line-height:14px"><svg width="11" height="12" viewBox="0 0 11 12" style="position:absolute;left:0;top:1px"><path d="M1.6 9.4L2.2 6.6 7.8 1l2 2-5.6 5.6z" fill="none" stroke="#1890ff" stroke-width="0.9"/><path d="M3.5 11.2h6" stroke="#1890ff" stroke-width="0.9"/></svg><span class="a" style="left:16px;top:0">修改</span></div>
<div class="a" style="left:67px;top:451px;width:44px;height:14px;color:#1890ff;font-size:12px;line-height:14px"><svg width="11" height="12" viewBox="0 0 11 12" style="position:absolute;left:0;top:1px"><path d="M1.6 9.4L2.2 6.6 7.8 1l2 2-5.6 5.6z" fill="none" stroke="#1890ff" stroke-width="0.9"/><path d="M3.5 11.2h6" stroke="#1890ff" stroke-width="0.9"/></svg><span class="a" style="left:16px;top:0">分解</span></div>
<div class="a" style="left:46px;top:479px;width:44px;height:14px;color:#1890ff;font-size:12px;line-height:14px"><svg width="10" height="12" viewBox="0 0 10 12" style="position:absolute;left:0;top:1px"><path d="M0.5 2.5h9M3.5 2.5V0.8h3v1.7M1.5 2.5v8.8h7V2.5M4 5v4M6 5v4" fill="none" stroke="#1890ff" stroke-width="0.9"/></svg><span class="a" style="left:15px;top:0">删除</span></div>
<div class="hl" style="left:0;top:516px;width:122px"></div>
<div class="a" style="left:14px;top:541px;width:44px;height:14px;color:#1890ff;font-size:12px;line-height:14px"><svg width="11" height="12" viewBox="0 0 11 12" style="position:absolute;left:0;top:1px"><path d="M1.6 9.4L2.2 6.6 7.8 1l2 2-5.6 5.6z" fill="none" stroke="#1890ff" stroke-width="0.9"/><path d="M3.5 11.2h6" stroke="#1890ff" stroke-width="0.9"/></svg><span class="a" style="left:16px;top:0">修改</span></div>
<div class="a" style="left:67px;top:541px;width:44px;height:14px;color:#1890ff;font-size:12px;line-height:14px"><svg width="11" height="12" viewBox="0 0 11 12" style="position:absolute;left:0;top:1px"><path d="M1.6 9.4L2.2 6.6 7.8 1l2 2-5.6 5.6z" fill="none" stroke="#1890ff" stroke-width="0.9"/><path d="M3.5 11.2h6" stroke="#1890ff" stroke-width="0.9"/></svg><span class="a" style="left:16px;top:0">分解</span></div>
<div class="a" style="left:46px;top:569px;width:44px;height:14px;color:#1890ff;font-size:12px;line-height:14px"><svg width="10" height="12" viewBox="0 0 10 12" style="position:absolute;left:0;top:1px"><path d="M0.5 2.5h9M3.5 2.5V0.8h3v1.7M1.5 2.5v8.8h7V2.5M4 5v4M6 5v4" fill="none" stroke="#1890ff" stroke-width="0.9"/></svg><span class="a" style="left:15px;top:0">删除</span></div>
<div class="hl" style="left:0;top:606px;width:122px"></div>
</div>
<div class="a" style="left:1894px;top:362px;width:6px;height:469px;background:#ececec"></div>
<div class="a" style="left:1894px;top:362px;width:6px;height:232px;background:#b8b8b8;border-radius:3px"></div>
<div class="a" style="left:503px;top:830px;width:1391px;height:6px;background:#ececec"></div>
<div class="a" style="left:503px;top:830px;width:1201px;height:6px;background:#b8b8b8;border-radius:3px"></div>
<div class="a" style="left:1360px;top:868px;line-height:20px;font-size:13px;color:#606266">共 33 条</div>
<div class="inp" style="left:1423px;top:864px;width:100px;height:28px;border-radius:3px"></div>
<div class="a" style="left:1443px;top:868px;line-height:20px;font-size:13px;color:#606266">10条/页</div>
<svg class="a" style="left:1507px;top:875px" width="9" height="6" viewBox="0 0 9 6"><path d="M0.5 0.8l4 4 4-4" fill="none" stroke="#c0c4cc" stroke-width="1.1"/></svg>
<div class="pg" style="left:1543px"><svg class="a" style="left:11px;top:9px" width="6" height="10" viewBox="0 0 6 10"><path d="M5 0.8L1 5l4 4.2" fill="none" stroke="#c0c4cc" stroke-width="1.5"/></svg></div>
<div class="pg" style="left:1583px;background:#1890ff;color:#fff">1</div>
<div class="pg" style="left:1623px">2</div>
<div class="pg" style="left:1663px">3</div>
<div class="pg" style="left:1703px">4</div>
<div class="pg" style="left:1743px"><svg class="a" style="left:12px;top:9px" width="6" height="10" viewBox="0 0 6 10"><path d="M1 0.8L5 5 1 9.2" fill="none" stroke="#303133" stroke-width="1.5"/></svg></div>
<div class="a" style="left:1802px;top:868px;line-height:20px;font-size:13px;color:#606266">前往</div>
<div class="inp" style="left:1832px;top:864px;width:45px;height:28px;border-radius:3px;text-align:center;line-height:26px;font-size:13px;color:#606266">1</div>
<div class="a" style="left:1882px;top:868px;line-height:20px;font-size:13px;color:#606266">页</div>
</body></html>
